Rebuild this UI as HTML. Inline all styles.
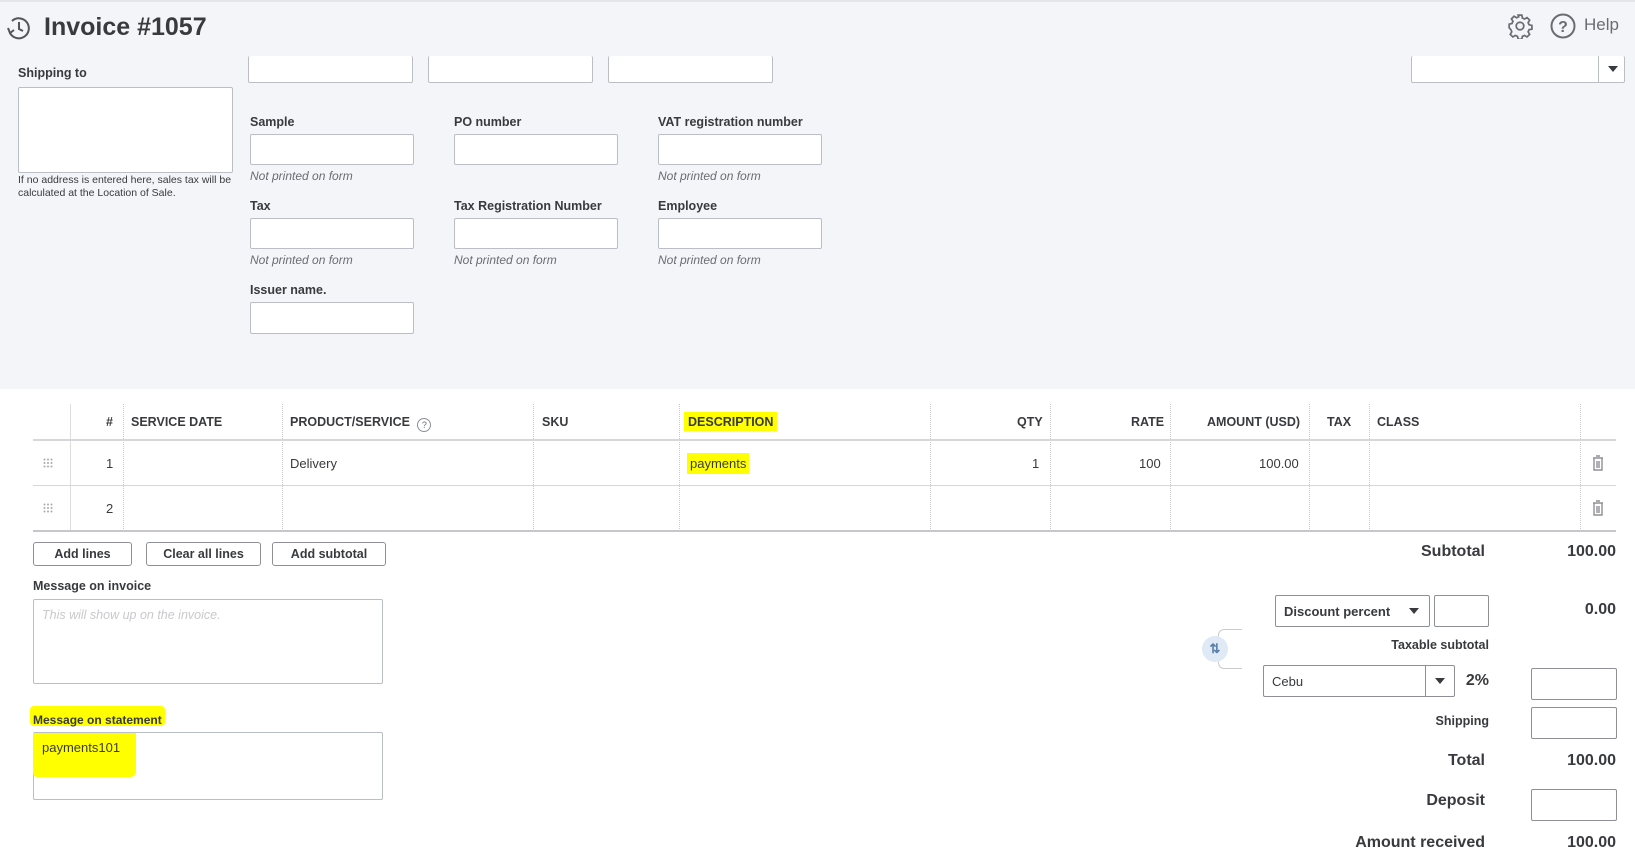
<!DOCTYPE html>
<html><head><meta charset="utf-8"><style>
*{box-sizing:border-box;margin:0;padding:0}
body{width:1635px;height:863px;overflow:hidden;background:#fff;font-family:"Liberation Sans",sans-serif;color:#393a3d;position:relative}
.a{position:absolute}
.top{left:0;top:0;width:1635px;height:389px;background:#f4f5f8;border-top:2px solid #e3e5e8}
.inp{position:absolute;background:#fff;border:1px solid #babec5;border-radius:2px}
.lbl{position:absolute;font-size:12.5px;font-weight:bold;color:#393a3d}
.np{position:absolute;font-size:12px;font-style:italic;color:#6b6c72}
.th{position:absolute;top:415px;font-size:12.5px;font-weight:bold;color:#393a3d}
.vl{position:absolute;width:0;border-left:1px dotted #c8c8c8}
.td{position:absolute;font-size:13px;color:#393a3d}
.btn{position:absolute;top:542px;height:24px;border:1px solid #8d9096;border-radius:3px;background:#fff;font-size:12.5px;font-weight:bold;text-align:center;line-height:22px}
.rt{position:absolute;text-align:right;font-weight:bold;color:#393a3d}
.hl{background:#ffff00}
</style></head><body>
<div class="a top"></div>
<svg class="a" style="left:5px;top:14px" width="28" height="28" viewBox="0 0 28 28" fill="none" stroke="#555" stroke-width="2"><path d="M5 19a10 10 0 1 0 2-12"/><path d="M14 8v7l4 2"/><path d="M3 14l2 5 4-3"/></svg>
<div class="a" style="left:44px;top:13px;font-size:25px;font-weight:bold;color:#393a3d">Invoice #1057</div>
<svg class="a" style="left:1507px;top:13px" width="26" height="26" viewBox="0 0 24 24" fill="none" stroke="#6b6c72" stroke-width="1.6"><circle cx="12" cy="12" r="3.5"/><path d="M10.3 2h3.4l.5 2.6 2 1 2.3-1.4 2.4 2.4-1.4 2.3.9 2 2.6.6v3.4l-2.6.5-.9 2 1.4 2.3-2.4 2.4-2.3-1.4-2 .9-.5 2.6h-3.4l-.6-2.6-2-.9-2.3 1.4-2.4-2.4 1.4-2.3-.8-2L2 13.7v-3.4l2.6-.6.9-2L4.1 5.4l2.4-2.4 2.3 1.4 2-.9z"/></svg>
<svg class="a" style="left:1549px;top:12px" width="28" height="28" viewBox="0 0 28 28"><circle cx="14" cy="14" r="11.5" fill="none" stroke="#6b6c72" stroke-width="2"/><text x="14" y="20" font-size="16" font-weight="bold" text-anchor="middle" fill="#6b6c72" font-family="Liberation Sans">?</text></svg>
<div class="a" style="left:1584px;top:15px;font-size:17px;color:#6b6c72">Help</div>

<div class="lbl" style="left:18px;top:66px">Shipping to</div>
<div class="inp" style="left:18px;top:87px;width:215px;height:86px"></div>
<div class="a" style="left:18px;top:174px;font-size:10.5px;line-height:13px;color:#393a3d">If no address is entered here, sales tax will be<br>calculated at the Location of Sale.</div>
<div class="inp" style="left:248px;top:56px;width:165px;height:27px;border-top:none"></div>
<div class="inp" style="left:428px;top:56px;width:165px;height:27px;border-top:none"></div>
<div class="inp" style="left:608px;top:56px;width:165px;height:27px;border-top:none"></div>
<div class="inp" style="left:1411px;top:56px;width:214px;height:27px;border-top:none"><div class="a" style="left:186px;top:0;height:26px;border-left:1px solid #babec5"></div><div class="a" style="left:196px;top:10px;border:5px solid transparent;border-top:6px solid #393a3d;border-bottom:none"></div></div>

<div class="lbl" style="left:250px;top:115px">Sample</div>
<div class="lbl" style="left:454px;top:115px">PO number</div>
<div class="lbl" style="left:658px;top:115px">VAT registration number</div>
<div class="inp" style="left:250px;top:134px;width:164px;height:31px"></div>
<div class="inp" style="left:454px;top:134px;width:164px;height:31px"></div>
<div class="inp" style="left:658px;top:134px;width:164px;height:31px"></div>
<div class="np" style="left:250px;top:169px">Not printed on form</div>
<div class="np" style="left:658px;top:169px">Not printed on form</div>
<div class="lbl" style="left:250px;top:199px">Tax</div>
<div class="lbl" style="left:454px;top:199px">Tax Registration Number</div>
<div class="lbl" style="left:658px;top:199px">Employee</div>
<div class="inp" style="left:250px;top:218px;width:164px;height:31px"></div>
<div class="inp" style="left:454px;top:218px;width:164px;height:31px"></div>
<div class="inp" style="left:658px;top:218px;width:164px;height:31px"></div>
<div class="np" style="left:250px;top:253px">Not printed on form</div>
<div class="np" style="left:454px;top:253px">Not printed on form</div>
<div class="np" style="left:658px;top:253px">Not printed on form</div>
<div class="lbl" style="left:250px;top:283px">Issuer name.</div>
<div class="inp" style="left:250px;top:302px;width:164px;height:32px"></div>

<div class="vl" style="left:70px;top:404px;height:127px;border-left-style:solid;border-color:#ddd"></div>
<div class="vl" style="left:123px;top:404px;height:127px"></div>
<div class="vl" style="left:282px;top:404px;height:127px"></div>
<div class="vl" style="left:533px;top:404px;height:127px"></div>
<div class="vl" style="left:679px;top:404px;height:127px"></div>
<div class="vl" style="left:930px;top:404px;height:127px"></div>
<div class="vl" style="left:1050px;top:404px;height:127px"></div>
<div class="vl" style="left:1170px;top:404px;height:127px"></div>
<div class="vl" style="left:1309px;top:404px;height:127px"></div>
<div class="vl" style="left:1369px;top:404px;height:127px"></div>
<div class="vl" style="left:1580px;top:404px;height:127px"></div>
<div class="a" style="left:33px;top:439px;width:1583px;height:2px;background:#d4d7dc"></div>
<div class="a" style="left:33px;top:485px;width:1583px;height:1px;background:#d4d7dc"></div>
<div class="a" style="left:33px;top:530px;width:1583px;height:2px;background:#c4c7cc"></div>
<div class="th" style="left:106px">#</div>
<div class="th" style="left:131px">SERVICE DATE</div>
<div class="th" style="left:290px">PRODUCT/SERVICE <span style="display:inline-block;width:14px;height:14px;border:1px solid #8d9096;border-radius:50%;font-size:9px;text-align:center;line-height:12px;font-weight:normal;vertical-align:-2px;margin-left:4px;color:#6b6c72">?</span></div>
<div class="th" style="left:542px">SKU</div>
<div class="th hl" style="left:684px;top:412px;padding:3px 4px 2px">DESCRIPTION</div>
<div class="th" style="left:1017px">QTY</div>
<div class="th" style="left:1131px">RATE</div>
<div class="th" style="left:1207px">AMOUNT (USD)</div>
<div class="th" style="left:1327px">TAX</div>
<div class="th" style="left:1377px">CLASS</div>
<svg class="a" style="left:43px;top:458px" width="10" height="10" viewBox="0 0 10 10" fill="#aaa"><circle cx="1.5" cy="1.5" r="1"/><circle cx="5" cy="1.5" r="1"/><circle cx="8.5" cy="1.5" r="1"/><circle cx="1.5" cy="5" r="1"/><circle cx="5" cy="5" r="1"/><circle cx="8.5" cy="5" r="1"/><circle cx="1.5" cy="8.5" r="1"/><circle cx="5" cy="8.5" r="1"/><circle cx="8.5" cy="8.5" r="1"/></svg>
<svg class="a" style="left:43px;top:503px" width="10" height="10" viewBox="0 0 10 10" fill="#aaa"><circle cx="1.5" cy="1.5" r="1"/><circle cx="5" cy="1.5" r="1"/><circle cx="8.5" cy="1.5" r="1"/><circle cx="1.5" cy="5" r="1"/><circle cx="5" cy="5" r="1"/><circle cx="8.5" cy="5" r="1"/><circle cx="1.5" cy="8.5" r="1"/><circle cx="5" cy="8.5" r="1"/><circle cx="8.5" cy="8.5" r="1"/></svg>
<div class="td" style="left:106px;top:456px">1</div>
<div class="td" style="left:106px;top:501px">2</div>
<div class="td" style="left:290px;top:456px">Delivery</div>
<div class="td hl" style="left:687px;top:453px;padding:3px 3px">payments</div>
<div class="td" style="left:1032px;top:456px">1</div>
<div class="td" style="left:1139px;top:456px">100</div>
<div class="td" style="left:1259px;top:456px">100.00</div>
<svg class="a" style="left:1592px;top:455px" width="12" height="16" viewBox="0 0 12 16" fill="none" stroke="#8d9096" stroke-width="1.4"><path d="M1 3h10M4 1h4M2 3v12h8V3M5 6v7M7 6v7"/></svg>
<svg class="a" style="left:1592px;top:500px" width="12" height="16" viewBox="0 0 12 16" fill="none" stroke="#8d9096" stroke-width="1.4"><path d="M1 3h10M4 1h4M2 3v12h8V3M5 6v7M7 6v7"/></svg>

<div class="btn" style="left:33px;width:99px">Add lines</div>
<div class="btn" style="left:146px;width:115px">Clear all lines</div>
<div class="btn" style="left:272px;width:114px">Add subtotal</div>

<div class="lbl" style="left:33px;top:579px">Message on invoice</div>
<div class="inp" style="left:33px;top:599px;width:350px;height:85px"><div class="a" style="left:8px;top:8px;font-size:12.5px;font-style:italic;color:#c8c9cc">This will show up on the invoice.</div></div>
<div class="a hl" style="left:30px;top:706px;width:135px;height:20px;border-radius:4px"></div>
<div class="inp" style="left:33px;top:732px;width:350px;height:68px"></div>
<div class="a hl" style="left:33px;top:733px;width:103px;height:44px;border-radius:0 0 6px 4px"></div>
<div class="lbl" style="left:33px;top:713px;font-size:12px">Message on statement</div>
<div class="a" style="left:42px;top:740px;font-size:13px;color:#393a3d">payments101</div>

<div class="rt" style="right:150px;top:543px;font-size:16px">Subtotal</div>
<div class="rt" style="right:19px;top:543px;font-size:16px">100.00</div>
<div class="inp" style="left:1275px;top:595px;width:155px;height:32px;border-color:#8d9096"><div class="a" style="left:8px;top:8px;font-size:13px;font-weight:bold;color:#393a3d">Discount percent</div><div class="a" style="left:133px;top:12px;border:5px solid transparent;border-top:6px solid #393a3d;border-bottom:none"></div></div>
<div class="inp" style="left:1434px;top:595px;width:55px;height:32px;border-color:#8d9096"></div>
<div class="rt" style="right:19px;top:601px;font-size:16px">0.00</div>
<div class="rt" style="right:146px;top:638px;font-size:12.5px;font-weight:bold">Taxable subtotal</div>
<div class="a" style="left:1218px;top:629px;width:24px;height:40px;border:1px solid #ccc;border-right:none;border-radius:6px 0 0 6px"></div>
<div class="a" style="left:1202px;top:636px;width:26px;height:26px;border-radius:50%;background:#dfeaf6;color:#5a7ea8;font-size:13px;font-weight:bold;text-align:center;line-height:26px">⇅</div>
<div class="inp" style="left:1263px;top:665px;width:192px;height:32px;border-color:#8d9096"><div class="a" style="left:8px;top:8px;font-size:13px">Cebu</div><div class="a" style="left:161px;top:0;height:30px;border-left:1px solid #8d9096"></div><div class="a" style="left:171px;top:12px;border:5px solid transparent;border-top:6px solid #393a3d;border-bottom:none"></div></div>
<div class="rt" style="right:146px;top:672px;font-size:16px">2%</div>
<div class="inp" style="left:1531px;top:668px;width:86px;height:32px;border-color:#8d9096"></div>
<div class="rt" style="right:146px;top:714px;font-size:12.5px">Shipping</div>
<div class="inp" style="left:1531px;top:707px;width:86px;height:32px;border-color:#8d9096"></div>
<div class="rt" style="right:150px;top:752px;font-size:16px">Total</div>
<div class="rt" style="right:19px;top:752px;font-size:16px">100.00</div>
<div class="rt" style="right:150px;top:792px;font-size:16px">Deposit</div>
<div class="inp" style="left:1531px;top:789px;width:86px;height:32px;border-color:#8d9096"></div>
<div class="rt" style="right:150px;top:834px;font-size:16px">Amount received</div>
<div class="rt" style="right:19px;top:834px;font-size:16px">100.00</div>
</body></html>
